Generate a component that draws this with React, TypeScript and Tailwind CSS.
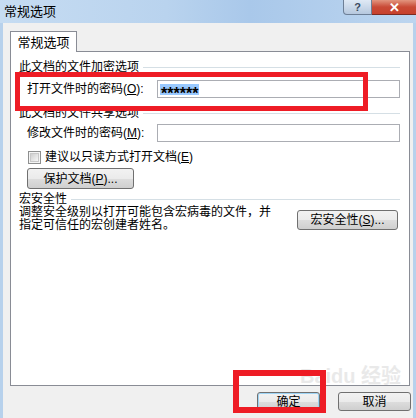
import React from "react";

const Btn = ({ children, className = "" }: { children: React.ReactNode; className?: string }) => (
  <div
    className={`flex items-center justify-center rounded-[3px] border border-[#707070] bg-[linear-gradient(#f2f2f2_0%,#ebebeb_50%,#dddddd_51%,#cfcfcf_100%)] text-[12px] leading-none text-black ${className}`}
  >
    {children}
  </div>
);

const GroupTitle = ({ text }: { text: string }) => (
  <div className="flex h-[14px] items-center pl-[8px] pr-[9px]">
    <span className="leading-none">{text}</span>
    <div className="ml-[4px] mt-[1px] h-px flex-1 bg-[#d5dfe5]" />
  </div>
);

const App = () => {
  return (
    <div className="relative h-[418px] w-[416px] overflow-hidden bg-[#f0f0f0] font-['Liberation_Sans','Noto_Sans_CJK_SC',sans-serif] text-[12px] text-black">
      {/* title bar */}
      <div className="flex h-[23px] items-start justify-between bg-[linear-gradient(90deg,#c6dcf2_0%,#b9d3ee_40%,#a9c8ea_60%,#bcd5ef_100%)]">
        <span className="pl-[4px] pt-[4px] text-[13px] leading-[15px]">常规选项</span>
        <div className="flex">
          <div className="flex h-[15px] w-[29px] items-center justify-center rounded-bl-[4px] border border-t-0 border-[#6d7f96] bg-[linear-gradient(#dfe9f5,#b6c8de)] text-[11px] font-bold leading-none text-[#3a4a5e]">
            ?
          </div>
          <div className="flex h-[15px] w-[44px] items-center justify-center border-b border-[#7b2b22] bg-[linear-gradient(#e2957f,#c94a36_50%,#c7412c)] text-[13px] font-bold leading-none text-white">
            ✕
          </div>
        </div>
      </div>

      {/* body */}
      <div className="flex h-[395px] flex-col border-l-[3px] border-r-[3px] border-[#b7d1ec] bg-[#f0f0f0]">
        <div className="flex pl-[7px] pt-[8px]">
          <div className="relative z-10 -mb-px flex h-[21px] w-[67px] items-center justify-center border border-b-0 border-[#898c95] bg-white text-[13px] leading-none">
            常规选项
          </div>
        </div>

        <div className="ml-[7px] flex h-[335px] w-[400px] flex-col border border-[#898c95] bg-white pt-[8px]">
          <GroupTitle text="此文档的文件加密选项" />
          <div className="mt-[6px] flex items-center pl-[16px] pr-[9px]">
            <span className="w-[130px] leading-none">
              打开文件时的密码(<span className="underline">O</span>):
            </span>
            <div className="flex h-[18px] flex-1 items-center border border-[#abadb3] pl-[2px]">
              <span className="inline-block h-[11px] bg-[#99c9ff] px-px text-[16px] font-bold leading-[11px]">
                <span className="relative top-[4px]">******</span>
              </span>
            </div>
          </div>

          <div className="mt-[8px]">
            <GroupTitle text="此文档的文件共享选项" />
          </div>
          <div className="mt-[4px] flex items-center pl-[16px] pr-[9px]">
            <span className="w-[130px] leading-none">
              修改文件时的密码(<span className="underline">M</span>):
            </span>
            <div className="h-[18px] flex-1 border border-[#abadb3]" />
          </div>

          <div className="mt-[8px] flex h-[14px] items-center pl-[17px]">
            <div className="flex h-[13px] w-[13px] items-center justify-center border border-[#8e8f8f] bg-[#f4f4f4]">
              <div className="h-[9px] w-[9px] border border-[#c8c8c8] bg-[linear-gradient(135deg,#cfcfcf,#f6f6f6)]" />
            </div>
            <span className="ml-[4px] leading-none">
              建议以只读方式打开文档(<span className="underline">E</span>)
            </span>
          </div>

          <div className="mt-[4px] flex pl-[16px]">
            <Btn className="h-[21px] w-[107px]">
              保护文档(<span className="underline">P</span>)...
            </Btn>
          </div>

          <div className="mt-[3px]">
            <GroupTitle text="宏安全性" />
          </div>

          <div className="flex items-start justify-between pl-[8px] pr-[11px]">
            <p className="text-[12px] leading-[13px]">
              调整安全级别以打开可能包含宏病毒的文件，并
              <br />
              指定可信任的宏创建者姓名。
            </p>
            <Btn className="mt-[4px] h-[20px] w-[101px]">
              宏安全性(<span className="underline">S</span>)...
            </Btn>
          </div>
        </div>

        <div className="flex justify-end gap-[18px] pr-[2px] pt-[6px]">
          <Btn className="h-[19px] w-[63px] border-[#3c7fb1] shadow-[inset_0_0_0_1px_#9ed4f5]">确定</Btn>
          <Btn className="h-[19px] w-[73px]">取消</Btn>
        </div>
      </div>

      {/* watermark */}
      <div className="pointer-events-none absolute left-[300px] top-[366px] text-[20px] font-bold leading-none text-[#dcdcdc] opacity-60">
        Baidu 经验
      </div>

      {/* red annotation boxes */}
      <div className="pointer-events-none absolute left-[15px] top-[72px] h-[39px] w-[353px] border-[5px] border-[#ee1c25]" />
      <div className="pointer-events-none absolute left-[233px] top-[370px] h-[43px] w-[93px] border-[6px] border-[#ee1c25]" />
    </div>
  );
};

export default App;
